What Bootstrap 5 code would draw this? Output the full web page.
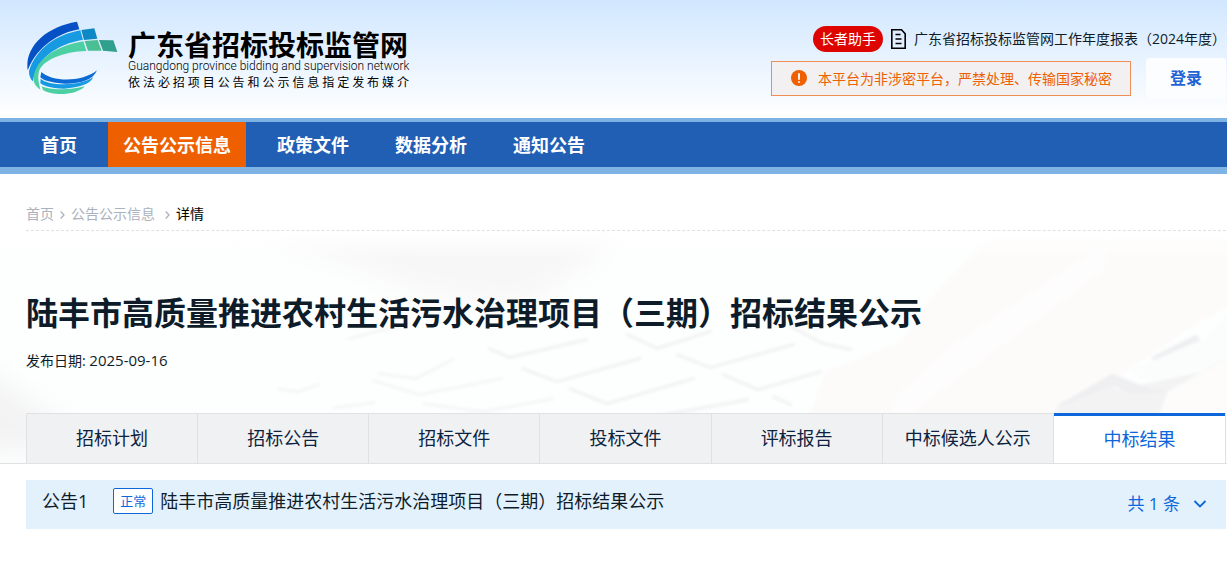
<!DOCTYPE html>
<html lang="zh-CN">
<head>
<meta charset="utf-8">
<meta name="viewport" content="width=device-width, initial-scale=1">
<title>广东省招标投标监管网</title>
<link href="https://cdn.jsdelivr.net/npm/bootstrap@5.3.0/dist/css/bootstrap.min.css" rel="stylesheet">
<style>
  body { font-family: "Open Sans", "Noto Sans CJK SC", sans-serif; font-size: 14px; line-height: 20px; color: #0e1c29; background: #fff; }
  a { text-decoration: none; color: inherit; }
  .page-gutter { padding-left: 26px; padding-right: 1px; }
  .site-header { background: linear-gradient(#d1e7ff, #fff); min-height: 118px; }
  .brand { color: #000; padding-top: 21px; gap: 10px; font-family: "Noto Sans CJK SC", sans-serif; }
  .brand-name { font-size: 28px; line-height: 30px; font-weight: 700; padding-top: 8px; }
  .brand-en { font-family: Roboto, sans-serif; font-size: 12px; line-height: 14px; font-weight: 300; white-space: nowrap; text-align: justify; text-align-last: justify; }
  .brand-sub { font-size: 12px; line-height: 18px; text-align: justify; text-align-last: justify; }
  .brand-text { width: 281px; }
  .header-tools { padding-top: 26px; }
  .tools-row { margin-top: 6px; gap: 15px; }
  .btn-elder { background: #de0500; color: #fff; border: 0; border-radius: 13px; padding: 3px 7px; font-size: 14px; line-height: 20px; }
  .secret-note { border: 1px solid #ee8e55; background: #f2f0f1; color: #ee6000; padding: 7px 18px 7px 19px; line-height: 19px; gap: 11px; }
  .btn-login { background: #fbfdff; color: #1f63d4; font-size: 16px; font-weight: 700; line-height: 24px; padding: 8px 24px; border: 0; border-radius: 4px; }
  .main-nav { background: #205fb4; border-top: 4px solid #7db3e2; border-bottom: 7px solid #7fb3e3; }
  .main-nav .nav { gap: 16px; }
  .main-nav .nav-link { color: #fff; font-size: 18px; font-weight: 700; line-height: 25px; padding: 11px 15px 9px; }
  .main-nav .nav-link.active { background: #ee5f00; }
  .crumbs { padding-top: 30px; }
  .crumbs ol { border-bottom: 1px dashed #e1e1e1; padding-bottom: 6px; gap: 6px; color: #aab2bd; }
  .crumbs svg { margin-top: 2px; }
  .crumbs .current { color: #000; }
  .hero { border-bottom: 1px solid #dfe1e3; }
  .hero-art { z-index: 0; }
  .hero-body { padding-top: 61px; }
  .notice-title { font-size: 32px; line-height: 42px; font-weight: 700; color: #0e1c29; margin-bottom: 16px; }
  .notice-date { line-height: 20px; margin-bottom: 42px; }
  .notice-date time { font-size: 15px; }
  .stages { border: 1px solid #dfe1e3; border-bottom: 0; background: #f0f1f3; }
  .stages .nav-link { color: #0c2340; font-size: 18px; line-height: 27px; padding: 11px 0; border-radius: 0; border-right: 1px solid #dfe1e3; white-space: nowrap; }
  .stages .nav-item:last-child .nav-link { border-right: 0; }
  .stages .nav-link.active { background: #fff; color: #0d67da; box-shadow: 0 -1px 0 #0d67da, inset 0 2px 0 #0d67da; padding: 12px 0 10px; }
  .record { background: #e3f1fd; margin-top: 16px; padding: 8px 19px 13px 16px; font-size: 18px; line-height: 26px; }
  .record-no { margin-right: 25px; }
  .state-tag { border: 1px solid #0d67da; border-radius: 2px; background: #fff; color: #0d67da; font-size: 13px; line-height: 24px; padding: 0 6px; margin-right: 7px; }
  .btn-count { border: 0; background: none; padding: 4px 0 0; color: #0d67da; font-size: 17px; line-height: 24px; gap: 13px; }
</style>
</head>
<body>
<header class="site-header page-gutter d-flex justify-content-between">
  <a class="brand d-flex align-items-start" href="#">
    <svg width="92" height="75" viewBox="17 18 276 225" aria-hidden="true">
      <path fill="#0450c4" d="M170 20 177 43C118 53 53 90 22 166 13 96 74 36 170 20Z"/>
      <path fill="#179ae2" d="M180 46 188 74C110 88 47 130 38 199 28 190 26 178 26 168 47 102 105 60 180 46Z"/>
      <path fill="#0d88c4" d="M183 45 222 40 231 71 191 75Z"/>
      <path fill="#4dcfa4" d="M189 79 198 108C132 109 62 135 55 174 51 195 58 212 60 224 45 213 38 201 40 188 47 130 112 92 189 79Z"/>
      <path fill="#4abf93" d="M193 78 232 75 244 107 203 107Z"/>
      <path fill="#30a08c" d="M236 75 279 76 291 111 248 107Z"/>
      <path fill="#0c6ad4" d="M63 171C98 203 188 201 230 166 218 196 178 207 132 206 95 204 68 196 60 187Z"/>
      <path fill="#179ae2" d="M61 191C85 214 180 214 219 186 210 208 178 217 132 221 88 220 64 210 60 204Z"/>
      <path fill="#4dcfa4" d="M64 214C92 227 152 225 194 214 166 243 96 243 68 225Z"/>
    </svg>
    <span class="brand-text d-block">
      <span class="brand-name d-block">广东省招标投标监管网</span>
      <span class="brand-en d-block">Guangdong province bidding and supervision network</span>
      <span class="brand-sub d-block">依法必招项目公告和公示信息指定发布媒介</span>
    </span>
  </a>
  <div class="header-tools d-flex flex-column align-items-end">
    <div class="d-flex align-items-center">
      <button class="btn-elder" type="button">长者助手</button>
      <a class="d-flex align-items-center" href="#">
        <svg class="mx-2" width="15" height="20" viewBox="0 0 15 20" fill="none" stroke="#000" aria-hidden="true"><path stroke-width="1.6" d="M.8.8h9.7l3.7 4v14.4H.8Z"/><path stroke-width="1.4" d="M4.5 5.5h5M4.5 10h6M4.5 14.5h6"/></svg>
        <span class="text-nowrap">广东省招标投标监管网工作年度报表（2024年度）</span>
      </a>
    </div>
    <div class="tools-row d-flex align-items-center">
      <div class="secret-note d-flex align-items-center text-nowrap">
        <svg width="16" height="16" viewBox="0 0 16 16" aria-hidden="true"><circle cx="8" cy="8" r="8" fill="#ee6000"/><path stroke="#fff" stroke-width="1.8" stroke-linecap="round" d="M8 4v5M8 11.8v.2"/></svg>
        <span>本平台为非涉密平台，严禁处理、传输国家秘密</span>
      </div>
      <button class="btn-login text-nowrap" type="button">登录</button>
    </div>
  </div>
</header>

<nav class="main-nav page-gutter" aria-label="主导航">
  <ul class="nav">
    <li><a class="nav-link" href="#">首页</a></li>
    <li><a class="nav-link active" href="#" aria-current="page">公告公示信息</a></li>
    <li><a class="nav-link" href="#">政策文件</a></li>
    <li><a class="nav-link" href="#">数据分析</a></li>
    <li><a class="nav-link" href="#">通知公告</a></li>
  </ul>
</nav>

<nav class="crumbs page-gutter" aria-label="面包屑">
  <ol class="list-unstyled d-flex align-items-center mb-0">
    <li><a href="#">首页</a></li>
    <li class="d-flex"><svg width="5" height="8" viewBox="0 0 5 8" fill="none" stroke="#aab2bd" stroke-width="1.3"><path d="M.7.5 4 4 .7 7.5"/></svg></li>
    <li><a href="#">公告公示信息</a></li>
    <li class="d-flex ps-1"><svg width="5" height="8" viewBox="0 0 5 8" fill="none" stroke="#aab2bd" stroke-width="1.3"><path d="M.7.5 4 4 .7 7.5"/></svg></li>
    <li class="current" aria-current="page">详情</li>
  </ol>
</nav>

<main>
  <section class="hero position-relative">
    <svg class="hero-art position-absolute top-0 start-0 w-100 h-100" viewBox="0 0 1227 231" preserveAspectRatio="xMidYMid slice" aria-hidden="true">
      <defs>
        <filter id="soft" x="-20%" y="-20%" width="140%" height="140%"><feGaussianBlur stdDeviation="1.5"/></filter>
        <filter id="haze" x="-30%" y="-30%" width="160%" height="160%"><feGaussianBlur stdDeviation="14"/></filter>
        <linearGradient id="fade" x2="0" y2="1"><stop stop-color="#fff"/><stop offset="1" stop-color="#fff" stop-opacity="0"/></linearGradient>
      </defs>
      <rect width="1227" height="231" fill="#fdfefe"/>
      <g filter="url(#haze)">
        <path fill="#f3f3f3" d="M-40 120 60 190 80 215-40 220Z"/>
        <path fill="#f8f7f7" d="M260 0H620L570 45 520 75 420 60 360 35Z"/>
      </g>
      <g filter="url(#soft)" fill="none" stroke="#f1f1f1" stroke-width="3" stroke-linejoin="round" stroke-linecap="round">
        <path d="M627 103 657 117 710 100M677 123 710 136 793 113M723 143 757 158 820 140M773 165 790 173M790 95 822 112 850 118"/>
        <path d="M490 117 510 126 587 108M523 137 557 150 640 127M570 157 607 172 693 147M620 187 637 188 747 168"/>
        <path stroke="#f5f5f5" d="M380 142 417 147 453 128M375 149 420 163 502 147M425 172 483 180 553 167M350 107 410 92M280 157 300 160 320 153M335 176 375 171"/>
      </g>
      <g filter="url(#soft)">
        <path fill="#fdfbfa" d="M990 8H1227V75C1175 100 1145 130 1090 160L1040 190 1000 231H790L825 140 900 110C920 75 955 35 990 8Z"/>
        <path fill="#fff" opacity=".6" d="M1110 8 1040 55 950 115 900 160 880 200 850 225 950 150 1100 40Z"/>
        <path fill="#f3f3f4" d="M1060 170 1108 153 1115 158 1200 140 1227 120V175L1140 190H1045Z"/>
        <path fill="#efeff1" d="M1055 174 1110 142 1150 158 1170 160 1130 162 1110 154 1065 172Z"/>
        <path fill="#efeff1" d="M1150 125 1194 103 1198 110 1150 130Z"/>
        <path fill="#fbfdfd" d="M1125 140 1200 108 1227 82V125L1200 138 1150 150Z"/>
        <path fill="#fdfcfb" d="M1227 125V231H1140L1165 160Z"/>
      </g>
      <rect width="1227" height="28" fill="url(#fade)"/>
    </svg>
    <div class="hero-body page-gutter position-relative">
      <h1 class="notice-title">陆丰市高质量推进农村生活污水治理项目（三期）招标结果公示</h1>
      <p class="notice-date">发布日期: <time datetime="2025-09-16">2025-09-16</time></p>
      <ul class="stages nav nav-justified flex-nowrap">
        <li class="nav-item"><a class="nav-link" href="#">招标计划</a></li>
        <li class="nav-item"><a class="nav-link" href="#">招标公告</a></li>
        <li class="nav-item"><a class="nav-link" href="#">招标文件</a></li>
        <li class="nav-item"><a class="nav-link" href="#">投标文件</a></li>
        <li class="nav-item"><a class="nav-link" href="#">评标报告</a></li>
        <li class="nav-item"><a class="nav-link" href="#">中标候选人公示</a></li>
        <li class="nav-item"><a class="nav-link active" href="#" aria-current="true">中标结果</a></li>
      </ul>
    </div>
  </section>

  <div class="page-gutter">
    <div class="record d-flex align-items-start">
      <span class="record-no">公告1</span>
      <span class="state-tag">正常</span>
      <a class="me-auto" href="#">陆丰市高质量推进农村生活污水治理项目（三期）招标结果公示</a>
      <button class="btn-count d-flex align-items-center" type="button">共 1 条
        <svg width="14" height="8" viewBox="0 0 14 8" fill="none" stroke="#0d67da" stroke-width="1.8" aria-hidden="true"><path d="M1.5 1 7 6.5 12.5 1"/></svg>
      </button>
    </div>
  </div>
</main>
<script src="https://cdn.jsdelivr.net/npm/bootstrap@5.3.0/dist/js/bootstrap.bundle.min.js"></script>
</body>
</html>
